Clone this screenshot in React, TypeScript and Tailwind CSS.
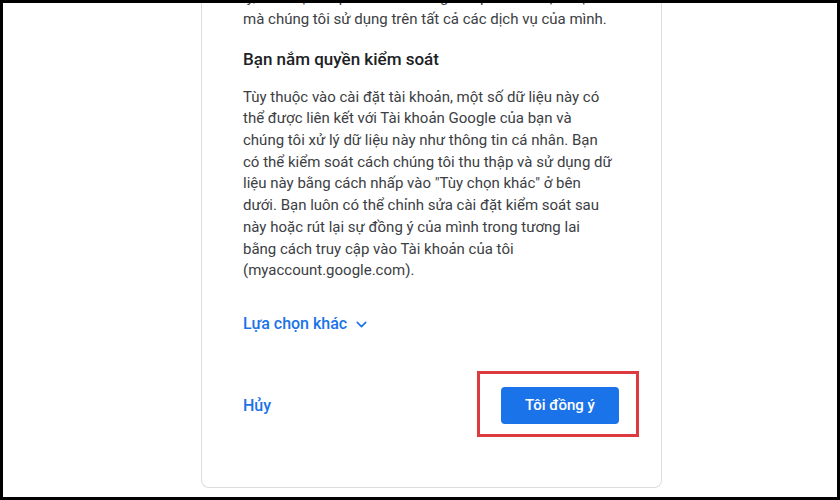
import { ChevronDown } from "lucide-react";

const intro = [
  "lý, cải thiện và phát triển những sản phẩm và dịch vụ",
  "mà chúng tôi sử dụng trên tất cả các dịch vụ của mình.",
];

const body = [
  "Tùy thuộc vào cài đặt tài khoản, một số dữ liệu này có",
  "thể được liên kết với Tài khoản Google của bạn và",
  "chúng tôi xử lý dữ liệu này như thông tin cá nhân. Bạn",
  "có thể kiểm soát cách chúng tôi thu thập và sử dụng dữ",
  'liệu này bằng cách nhấp vào "Tùy chọn khác" ở bên',
  "dưới. Bạn luôn có thể chỉnh sửa cài đặt kiểm soát sau",
  "này hoặc rút lại sự đồng ý của mình trong tương lai",
  "bằng cách truy cập vào Tài khoản của tôi",
  "(myaccount.google.com).",
];

export default function App() {
  return (
    <div
      className="w-[840px] h-[500px] bg-black p-[3px] flex"
      style={{ fontFamily: "Roboto, 'Noto Sans', sans-serif" }}
    >
      <div className="flex-1 bg-white overflow-hidden flex flex-col justify-end pb-[9px] pl-[198px]">
        <div className="w-[461px] shrink-0 border border-[#dadce0] rounded-b-[8px] border-t-0 px-[41px] pb-[63px]">
          {/* end of the previous paragraph */}
          <div className="text-[15px] leading-[21.7px] text-[#3c4043]">
            {intro.map((line) => (
              <div key={line} className="whitespace-nowrap">
                {line}
              </div>
            ))}
          </div>

          <h2 className="mt-[16px] text-[17px] leading-[24px] font-medium text-[#202124]">
            Bạn nắm quyền kiểm soát
          </h2>

          <div className="mt-[16px] text-[15px] leading-[21.7px] text-[#3c4043]">
            {body.map((line) => (
              <div key={line} className="whitespace-nowrap">
                {line}
              </div>
            ))}
          </div>

          <button className="mt-[31px] flex items-center gap-[6px] h-[22px] text-[16px] font-medium text-[#1a73e8]">
            Lựa chọn khác
            <ChevronDown size={17} strokeWidth={2.25} />
          </button>

          <div className="mt-[52px] flex items-center justify-between">
            <button className="text-[16px] font-medium text-[#1a73e8]">
              Hủy
            </button>
            <div className="relative mr-[1px]">
              <button className="w-[118px] h-[37px] rounded-[4px] bg-[#1a73e8] text-white text-[15px] font-medium">
                Tôi đồng ý
              </button>
              {/* highlight frame */}
              <div className="absolute -left-[24px] -right-[20px] -top-[16px] -bottom-[13px] border-[3px] border-[#dc3a3f]" />
            </div>
          </div>
        </div>
      </div>
    </div>
  );
}
